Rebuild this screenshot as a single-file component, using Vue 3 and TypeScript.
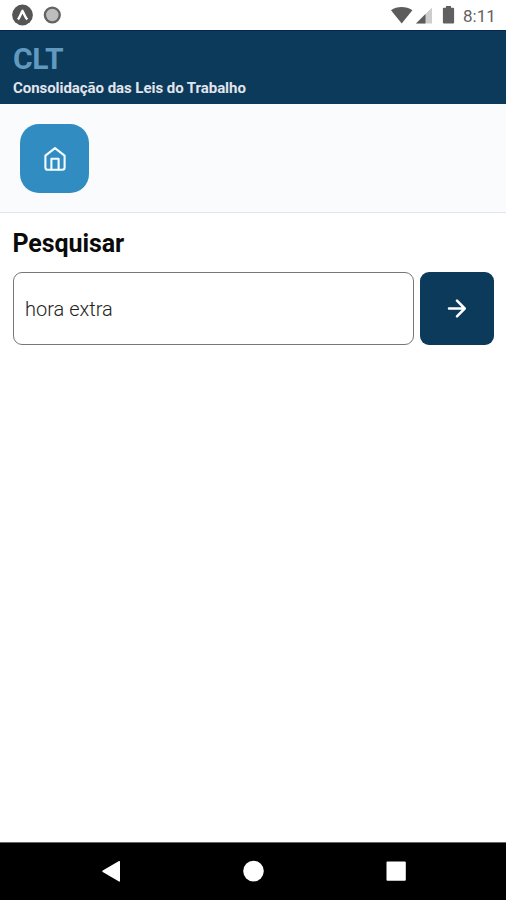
<script setup lang="ts">
import { ref } from 'vue'

const query = ref<string>('hora extra')
const time = '8:11'
</script>

<template>
  <div class="screen">
    <div class="status">
      <svg class="status-left" width="64" height="30" viewBox="0 0 64 30">
        <circle cx="22.5" cy="15" r="10.4" fill="#555" />
        <path d="M18 19.5C20 17 21 13.5 22.5 10.8C24 13.5 25 17 27.3 19.5" fill="none" stroke="#fff" stroke-width="2.4" stroke-linejoin="round" />
        <circle cx="52.3" cy="15" r="7.4" fill="#bdbdbd" stroke="#636363" stroke-width="2.4" />
      </svg>
      <svg class="status-right" width="66" height="30" viewBox="390 0 66 30">
        <path d="M391 10.2C397 5.9 406 5.9 412.4 10.2L401.7 23.5Z" fill="#5c5c5c" />
        <path d="M432 7.5V23.5H416Z" fill="#cdcdcd" />
        <path d="M425.5 14V23.5H416Z" fill="#5c5c5c" />
        <path d="M446 6h5v1.8h2.2q.9 0 .9.9v13.8q0 1-1 1h-9.2q-1 0-1-1V8.700q0-.9.9-.9H446Z" fill="#606060" />
      </svg>
      <span class="time">{{ time }}</span>
    </div>

    <header class="header">
      <h1 class="brand">CLT</h1>
      <p class="subtitle">Consolidação das Leis do Trabalho</p>
    </header>

    <nav class="toolbar">
      <button class="home" type="button" aria-label="Início">
        <svg width="24" height="26" viewBox="0 0 24 26" fill="none" stroke="#f4fbff" stroke-width="2.1" stroke-linecap="round" stroke-linejoin="round">
          <path d="M2.400 9.700L12 2.200L21.600 9.700V21.600Q21.600 23.800 19.400 23.800H4.600Q2.400 23.800 2.400 21.600Z" />
          <path d="M8.400 23.500V12.700H15.600V23.500" />
        </svg>
      </button>
    </nav>

    <main class="content">
      <h2 class="title">Pesquisar</h2>
      <form class="search" @submit.prevent>
        <input v-model="query" class="field" type="text" aria-label="Pesquisar" />
        <button class="go" type="submit" aria-label="Buscar">
          <svg width="20" height="20" viewBox="0 0 20 20" fill="none" stroke="#fff" stroke-width="2.500" stroke-linecap="round" stroke-linejoin="round">
            <path d="M2 10.500H17.500M10 2.700L17.700 10.500L10 18.300" />
          </svg>
        </button>
      </form>
    </main>

    <footer class="android-nav">
      <svg width="506" height="58" viewBox="0 0 506 58" fill="#fff">
        <path d="M119 18.100Q120 17.600 120 18.800V37.800Q120 39 119 38.500L102.700 29.100Q101.700 28.300 102.700 27.500Z" />
        <circle cx="253.500" cy="28.100" r="10.300" />
        <rect x="386.500" y="18.500" width="19.300" height="19.300" rx="1" />
      </svg>
    </footer>
  </div>
</template>

<style>
body {
  margin: 0;
  background: #fff;
}
</style>

<style scoped>
.screen {
  display: flex;
  flex-direction: column;
  width: 506px;
  height: 900px;
  overflow: hidden;
  background: #fff;
  font-family: Roboto, "Liberation Sans", sans-serif;
}

.status {
  display: flex;
  flex: none;
  align-items: center;
  height: 30px;
}

.status-right {
  margin-left: auto;
}

.time {
  width: 43px;
  margin-left: 7px;
  color: #626262;
  font-size: 17px;
  line-height: 30px;
  padding-top: 1px;
  box-sizing: border-box;
  white-space: nowrap;
}

.header {
  flex: none;
  box-sizing: border-box;
  height: 74px;
  padding: 10px 13px 0;
  background: #0b3a5b;
  border-top: 1px solid #08234f;
}

.brand {
  margin: 0;
  color: #6299be;
  font-size: 30px;
  font-weight: 700;
  line-height: 35px;
  letter-spacing: -0.3px;
}

.subtitle {
  margin: 3px 0 0;
  color: #e2e4ec;
  font-size: 15px;
  font-weight: 700;
  line-height: 18px;
  letter-spacing: -0.05px;
  white-space: nowrap;
}

.toolbar {
  display: flex;
  flex: none;
  box-sizing: border-box;
  height: 109px;
  padding: 20px;
  background: #f9fbfd;
  border-bottom: 1.500px solid #e0e3f0;
}

.home {
  display: flex;
  align-items: center;
  justify-content: center;
  box-sizing: border-box;
  width: 69px;
  height: 68.500px;
  padding: 2px 0 0 1px;
  border: 0;
  border-radius: 19px;
  background: #318dc1;
}

.content {
  flex: 1;
  padding: 16px 12px 0 12.500px;
}

.title {
  margin: 0;
  color: #0a0a0a;
  font-size: 25px;
  font-weight: 700;
  line-height: 30px;
  letter-spacing: -0.1px;
}

.search {
  display: flex;
  gap: 6px;
  margin-top: 12.500px;
}

.field {
  box-sizing: border-box;
  width: 402px;
  height: 73.500px;
  padding: 2px 11.500px 0;
  border: 1.400px solid #777;
  border-radius: 9px;
  outline: 0;
  background: #fff;
  color: #222;
  font-family: inherit;
  font-size: 20px;
  font-weight: 300;
}

.go {
  display: flex;
  align-items: center;
  justify-content: center;
  width: 74px;
  height: 73.500px;
  padding: 0;
  border: 0;
  border-radius: 9px;
  background: #0b3a5b;
}

.android-nav {
  display: flex;
  flex: none;
  height: 58px;
  background: #000;
  border-top: 1px solid #666;
  box-sizing: border-box;
}
</style>
